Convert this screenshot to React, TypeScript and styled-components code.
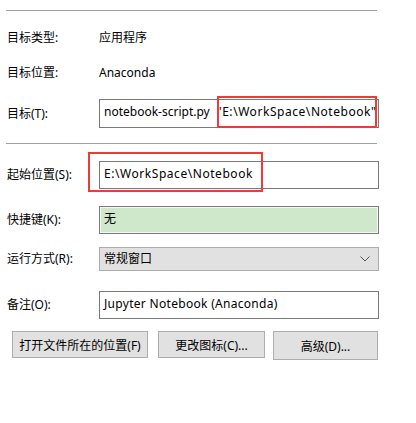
import * as React from "react";
import styled, { createGlobalStyle } from "styled-components";

const GlobalStyle = createGlobalStyle`
  html, body {
    margin: 0;
    padding: 0;
    background: #ffffff;
  }
  body {
    font-family: "Segoe UI", "Noto Sans", "Noto Sans CJK SC", sans-serif;
    font-size: 12px;
    color: #000000;
  }
`;

const Page = styled.div`
  width: 416px;
  height: 423px;
  padding: 10px 0 0 6px;
  box-sizing: border-box;
`;

const Separator = styled.div<{ $mt?: number }>`
  width: 371px;
  height: 1px;
  background: #a0a0a0;
  margin-top: ${(p) => p.$mt ?? 0}px;
`;

const Row = styled.div<{ $mt: number; $h: number }>`
  display: grid;
  grid-template-columns: 92px 280px;
  align-items: center;
  height: ${(p) => p.$h}px;
  margin-top: ${(p) => p.$mt}px;
  padding-left: 1px;
`;

const Label = styled.div`
  line-height: 16px;
  white-space: nowrap;
`;

const Value = styled.div`
  line-height: 16px;
  white-space: nowrap;
`;

const FieldWrap = styled.div`
  position: relative;
  height: 100%;
`;

const TextField = styled.div<{ $green?: boolean; $ls?: number }>`
  box-sizing: border-box;
  height: 100%;
  border: 1px solid #7a7a7a;
  background: ${(p) => (p.$green ? "#cfe8cc" : "#ffffff")};
  box-shadow: ${(p) => (p.$green ? "inset 0 0 0 1px #f4faf3" : "none")};
  padding: 4px 2px 0 4px;
  letter-spacing: ${(p) => p.$ls ?? 0}px;
  line-height: 16px;
  white-space: nowrap;
  overflow: hidden;
`;

const PathText = styled.span<{ $ml?: number }>`
  margin-left: ${(p) => p.$ml ?? 0}px;
  letter-spacing: 0.55px;
`;

const Highlight = styled.div`
  position: absolute;
  box-sizing: border-box;
  border: 2px solid #f03a3a;
  pointer-events: none;
`;

const Select = styled.div`
  box-sizing: border-box;
  height: 100%;
  border: 1px solid #adadad;
  background: #e1e1e1;
  display: flex;
  align-items: center;
  justify-content: space-between;
  padding: 0 8px 0 4px;
  line-height: 16px;
`;

const ButtonBar = styled.div`
  display: flex;
  align-items: flex-start;
  margin-top: 12px;
  padding-left: 6px;
`;

const Button = styled.div<{ $w: number; $h?: number; $ml?: number }>`
  box-sizing: border-box;
  width: ${(p) => p.$w}px;
  height: ${(p) => p.$h ?? 27}px;
  margin-left: ${(p) => p.$ml ?? 0}px;
  border: 1px solid #adadad;
  background: #e1e1e1;
  display: flex;
  align-items: center;
  justify-content: center;
  white-space: nowrap;
`;

function Chevron() {
  return (
    <svg width="10" height="6" viewBox="0 0 10 6">
      <path d="M0.5 0.5 L5 5 L9.5 0.5" fill="none" stroke="#555" strokeWidth="1" />
    </svg>
  );
}

export default function App(): JSX.Element {
  return (
    <Page>
      <GlobalStyle />
      <Separator />

      <Row $mt={19} $h={16}>
        <Label>目标类型:</Label>
        <Value>应用程序</Value>
      </Row>

      <Row $mt={19} $h={16}>
        <Label>目标位置:</Label>
        <Value>Anaconda</Value>
      </Row>

      <Row $mt={18} $h={29}>
        <Label>目标(T):</Label>
        <FieldWrap>
          <TextField>
            notebook-script.py<PathText $ml={7}>"E:\WorkSpace\Notebook"</PathText>
          </TextField>
          <Highlight style={{ left: 118, top: -3, width: 160, height: 32 }} />
        </FieldWrap>
      </Row>

      <Separator $mt={15} />

      <Row $mt={17} $h={28}>
        <Label>起始位置(S):</Label>
        <FieldWrap>
          <TextField>
            <PathText>E:\WorkSpace\Notebook</PathText>
          </TextField>
          <Highlight style={{ left: -11, top: -9, width: 175, height: 40 }} />
        </FieldWrap>
      </Row>

      <Row $mt={17} $h={28}>
        <Label>快捷键(K):</Label>
        <FieldWrap>
          <TextField $green>无</TextField>
        </FieldWrap>
      </Row>

      <Row $mt={13} $h={24}>
        <Label>运行方式(R):</Label>
        <FieldWrap>
          <Select>
            <span>常规窗口</span>
            <Chevron />
          </Select>
        </FieldWrap>
      </Row>

      <Row $mt={20} $h={28}>
        <Label>备注(O):</Label>
        <FieldWrap>
          <TextField $ls={0.3}>Jupyter Notebook (Anaconda)</TextField>
        </FieldWrap>
      </Row>

      <ButtonBar>
        <Button $w={136}>打开文件所在的位置(F)</Button>
        <Button $w={107} $ml={10}>更改图标(C)...</Button>
        <Button $w={105} $h={29} $ml={8}>高级(D)...</Button>
      </ButtonBar>
    </Page>
  );
}
